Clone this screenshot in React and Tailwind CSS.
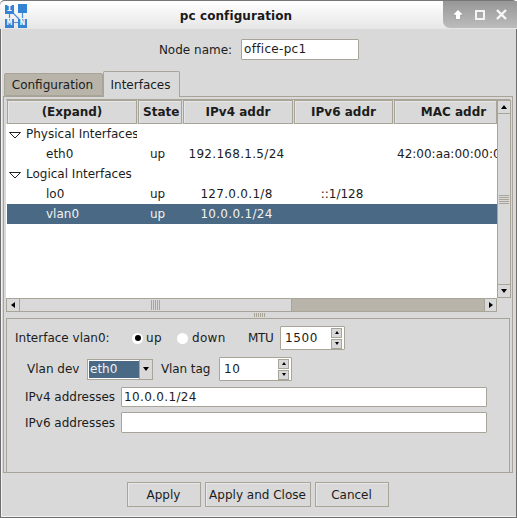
const F = "font-['DejaVu_Sans',sans-serif]";

function Tri({ dir = "down", size = 3, color = "#000" }) {
  const s = size;
  const pts = {
    up: `0,${s + 1} ${s},0 ${2 * s},${s + 1}`,
    down: `0,0 ${2 * s},0 ${s},${s + 1}`,
    left: `${s + 1},0 ${s + 1},${2 * s} 0,${s}`,
    right: `0,0 0,${2 * s} ${s + 1},${s}`,
  }[dir];
  const w = dir === "up" || dir === "down" ? 2 * s : s + 1;
  const h = dir === "up" || dir === "down" ? s + 1 : 2 * s;
  return (
    <svg width={w} height={h} viewBox={`0 0 ${w} ${h}`} className="block">
      <polygon points={pts} fill={color} />
    </svg>
  );
}

function Logo() {
  const box = "bg-[#3584d4] text-white text-[9px] font-bold leading-none flex items-center justify-center w-[9px] h-[9px] font-['Liberation_Mono',monospace]";
  return (
    <div className="relative w-[22px] h-[23px]">
      <svg width="22" height="23" className="absolute inset-0">
        <path d="M4.5 9 L4.5 14 M17.5 9 L17.5 14 M9 18.5 L13 18.5 M8 9 L14 15" stroke="#4a90d8" strokeWidth="1.2" fill="none" />
      </svg>
      <div className="relative grid grid-cols-[9px_9px] gap-x-[4px] gap-y-[5px]">
        <div className={`${box} mt-[1px]`}>I</div>
        <div className="w-[9px] h-[9px] bg-[#3584d4]" />
        <div className={box}>M</div>
        <div className={box}>N</div>
      </div>
    </div>
  );
}

function HeadCell({ w, label, left, cls = "" }) {
  return (
    <div
      className={`h-[24px] shrink-0 overflow-hidden flex items-center bg-[#d9d9d9] border border-[#a8a498] shadow-[inset_1px_1px_0_#e6e6e6] font-bold text-[12px] whitespace-nowrap ${w} ${left ? "justify-start pl-[4px]" : "justify-center"} ${cls}`}
    >
      {label}
    </div>
  );
}

function Row({ sel, expander, name, indent, state, v4, v6, mac }) {
  return (
    <div className={`h-[20px] flex items-center text-[12px] whitespace-nowrap ${sel ? "bg-[#4a6984] text-[#f2f2f2]" : "text-[#1c1c1c]"}`}>
      <div className={`w-[130px] shrink-0 overflow-hidden flex items-center ${indent ? "pl-[39px]" : "pl-[2px]"}`}>
        {expander && (
          <svg width="12" height="7" className="mr-[5px] mt-[3px] shrink-0">
            <polygon points="0.5,0.5 11.5,0.5 6,6" fill="none" stroke="#222" strokeWidth="1" />
          </svg>
        )}
        <span>{name}</span>
      </div>
      <div className="w-[45px] shrink-0 pl-[13px]">{state}</div>
      <div className="w-[109px] shrink-0 text-center tracking-[0.3px]">{v4}</div>
      <div className="w-[102px] shrink-0 text-center">{v6}</div>
      <div className="w-[104px] shrink-0 overflow-hidden pl-[4px]">{mac}</div>
    </div>
  );
}

function Spin({ value, w }) {
  return (
    <div className={`h-[24px] bg-white border border-[#a8a498] rounded-[1px] flex items-center ${w}`}>
      <span className="flex-1 pl-[4px] text-[12px] text-[#1c1c1c] tracking-[0.6px]">{value}</span>
      <div className="w-[11px] mr-[2px] flex flex-col gap-[1px]">
        <div className="h-[10px] bg-[#d9d9d9] border border-[#a8a498] flex items-center justify-center"><Tri dir="up" size={2} /></div>
        <div className="h-[10px] bg-[#d9d9d9] border border-[#a8a498] flex items-center justify-center"><Tri dir="down" size={2} /></div>
      </div>
    </div>
  );
}

function Field({ label, value, h }) {
  return (
    <div className="flex items-center">
      <span className="w-[114px] pl-[18px] shrink-0 whitespace-nowrap">{label}</span>
      <div className={`w-[366px] ${h} bg-white border border-[#a8a498] rounded-[1px] pl-[2px] leading-[18px] text-[#1c1c1c] tracking-[0.35px]`}>{value}</div>
    </div>
  );
}

function Btn({ w, children }) {
  return (
    <div className={`h-[25px] ${w} border border-[#a8a498] bg-[#d9d9d9] shadow-[inset_1px_1px_0_#e8e8e8] flex items-center justify-center text-[12px] text-[#1c1c1c] whitespace-nowrap`}>
      {children}
    </div>
  );
}

export default function App() {
  return (
    <div className={`${F} w-[517px] h-[518px] overflow-hidden bg-white`}>
      <div className="w-[517px] h-[518px] flex flex-col bg-[#d9d9d9] border-x border-b border-[#6e6e6e] rounded-t-[5px] text-[12px] text-[#1c1c1c] box-border shadow-[inset_1px_-1px_0_#f2f2f2]">
        {/* title bar */}
        <div className="h-[29px] -mx-[1px] shrink-0 flex items-center relative bg-gradient-to-b from-[#ffffff] to-[#e6e6e6] border-t border-[#777] rounded-t-[5px]">
          <div className="absolute left-[5px] top-[3px]"><Logo /></div>
          <div className="flex-1 text-center font-bold text-[12px] text-[#1a1a1a] pr-[45px] mt-[2px] tracking-[0.1px]">pc configuration</div>
          <div className="absolute right-0 top-0 w-[74px] h-[27px] bg-gradient-to-b from-[#979797] to-[#bcbcbc] rounded-bl-[7px] flex items-center justify-between pl-[9px] pr-[10px]">
            <svg width="12" height="11" viewBox="0 0 12 11"><path d="M6 .5 L11.5 6 H8.5 V10.5 H3.5 V6 H.5 Z" fill="#ffffff" stroke="#8a8a8a" strokeWidth=".6" /></svg>
            <svg width="10" height="10" viewBox="0 0 10 10"><rect x="1" y="1" width="8" height="8" fill="none" stroke="#f4f4f4" strokeWidth="2" /></svg>
            <svg width="11" height="11" viewBox="0 0 11 11"><path d="M1 1 L10 10 M10 1 L1 10" stroke="#f8f8f8" strokeWidth="2.4" /></svg>
          </div>
        </div>

        {/* node name */}
        <div className="h-[40px] shrink-0 flex items-center justify-center pl-[1px] pt-[1px]">
          <span className="mr-[9px]">Node name:</span>
          <div className="w-[118px] h-[21px] bg-white border border-[#a8a498] rounded-[1px] pl-[2px] leading-[19px] tracking-[0.3px]">office-pc1</div>
        </div>

        {/* tabs */}
        <div className="h-[27px] shrink-0 flex items-end pl-[3px]">
          <div className="w-[99px] h-[23px] pr-[2px] bg-[#b8b4a9] border border-[#a8a498] rounded-t-[2px] flex items-center justify-center">Configuration</div>
          <div className="w-[77px] h-[26px] pr-[2px] bg-[#d9d9d9] border border-b-0 border-[#a8a498] rounded-t-[2px] flex items-center justify-center relative top-[1px] z-10">Interfaces</div>
        </div>

        {/* notebook */}
        <div className="ml-[2px] mr-[3px] h-[377px] shrink-0 border border-[#a8a498] p-[2px] pb-0 flex flex-col">
          {/* tree + scrollbar */}
          <div className="flex h-[199px] shrink-0 border-t border-[#a8a498]">
            <div className="w-[491px] shrink-0 flex flex-col overflow-hidden">
              <div className="flex gap-[1px] pl-[1px] shrink-0">
                <HeadCell w="w-[130px]" label="(Expand)" />
                <HeadCell w="w-[44px]" label="State" left />
                <HeadCell w="w-[110px]" label="IPv4 addr" />
                <HeadCell w="w-[99px]" label="IPv6 addr" />
                <HeadCell w="w-[103px]" label="MAC addr" cls="pl-[16px]" />
              </div>
              <div className="flex-1 bg-white pl-[1px]">
                <Row expander name="Physical Interfaces" />
                <Row indent name="eth0" state="up" v4="192.168.1.5/24" mac="42:00:aa:00:00:01" />
                <Row expander name="Logical Interfaces" />
                <Row indent name="lo0" state="up" v4="127.0.0.1/8" v6="::1/128" />
                <Row sel indent name="vlan0" state="up" v4="10.0.0.1/24" />
              </div>
            </div>
            <div className="w-[14px] shrink-0 border border-[#a8a498] flex flex-col bg-[#d9d9d9]">
              <div className="h-[13px] shrink-0 border-b border-[#a8a498] flex items-center justify-center"><Tri dir="up" /></div>
              <div className="flex-1 flex items-center justify-center">
                <div className="flex flex-col gap-[1px]">
                  <div className="w-[10px] h-[1px] bg-[#a8a498]" />
                  <div className="w-[10px] h-[1px] bg-[#a8a498]" />
                  <div className="w-[10px] h-[1px] bg-[#a8a498]" />
                  <div className="w-[10px] h-[1px] bg-[#a8a498]" />
                  <div className="w-[10px] h-[1px] bg-[#a8a498]" />
                </div>
              </div>
              <div className="h-[13px] shrink-0 border-t border-[#a8a498] flex items-center justify-center"><Tri dir="down" /></div>
            </div>
          </div>
          {/* h scroll */}
          <div className="w-[491px] h-[14px] shrink-0 border border-[#a8a498] flex bg-[#b8b4a9]">
            <div className="w-[13px] bg-[#d9d9d9] border-r border-[#a8a498] flex items-center justify-center"><Tri dir="left" /></div>
            <div className="w-[272px] bg-[#d9d9d9] border-r border-[#a8a498] flex items-center justify-center">
              <div className="flex gap-[1px]">
                {[0,1,2,3,4].map(i => <div key={i} className="w-[1px] h-[10px] bg-[#a8a498]" />)}
              </div>
            </div>
            <div className="flex-1" />
            <div className="w-[12px] bg-[#d9d9d9] border-l border-[#a8a498] flex items-center justify-center"><Tri dir="right" /></div>
          </div>
          {/* sash */}
          <div className="h-[6px] shrink-0 flex items-center justify-center pl-[3px]">
            <div className="flex gap-[1px]">
              {[0,1,2,3,4,5].map(i => <div key={i} className="w-[1px] h-[4px] bg-[#a8a498]" />)}
            </div>
          </div>
          {/* frame */}
          <div className="flex-1 border-x border-t border-[#a8a498] flex flex-col pt-[7px]">
            <div className="h-[24px] flex items-center pl-[8px]">
              <span className="w-[117px]">Interface vlan0:</span>
              <span className="w-[11px] h-[11px] rounded-full bg-white flex items-center justify-center"><span className="w-[6px] h-[6px] rounded-full bg-black" /></span>
              <span className="ml-[3px] w-[31px] tracking-[0.3px]">up</span>
              <span className="w-[11px] h-[11px] rounded-full bg-white" />
              <span className="ml-[4px] w-[56px] tracking-[0.3px]">down</span>
              <span className="w-[32px] tracking-[-0.3px]">MTU</span>
              <Spin value="1500" w="w-[65px]" />
            </div>
            <div className="h-[24px] mt-[7px] flex items-center pl-[20px]">
              <span className="w-[60px]">Vlan dev</span>
              <div className="w-[66px] h-[21px] flex items-center border border-[#a8a498] bg-white">
                <span className="flex-1 h-[17px] ml-[1px] bg-[#4a6984] text-[#f2f2f2] pl-[1px] leading-[17px]">eth0</span>
                <span className="w-[13px] h-[19px] bg-[#d9d9d9] border-l border-[#a8a498] flex items-center justify-center"><Tri dir="down" /></span>
              </div>
              <span className="ml-[8px] w-[58px] tracking-[-0.1px]">Vlan tag</span>
              <Spin value="10" w="w-[73px]" />
            </div>
            <div className="mt-[6px] flex flex-col gap-[5px]">
              <Field label="IPv4 addresses" value="10.0.0.1/24" h="h-[20px]" />
              <Field label="IPv6 addresses" value="" h="h-[21px]" />
            </div>
          </div>
        </div>

        {/* buttons */}
        <div className="flex-1 flex items-center justify-center gap-[4px] pr-[2px] pb-[1px]">
          <Btn w="w-[74px]">Apply</Btn>
          <Btn w="w-[106px]">Apply and Close</Btn>
          <Btn w="w-[74px]">Cancel</Btn>
        </div>
      </div>
    </div>
  );
}
